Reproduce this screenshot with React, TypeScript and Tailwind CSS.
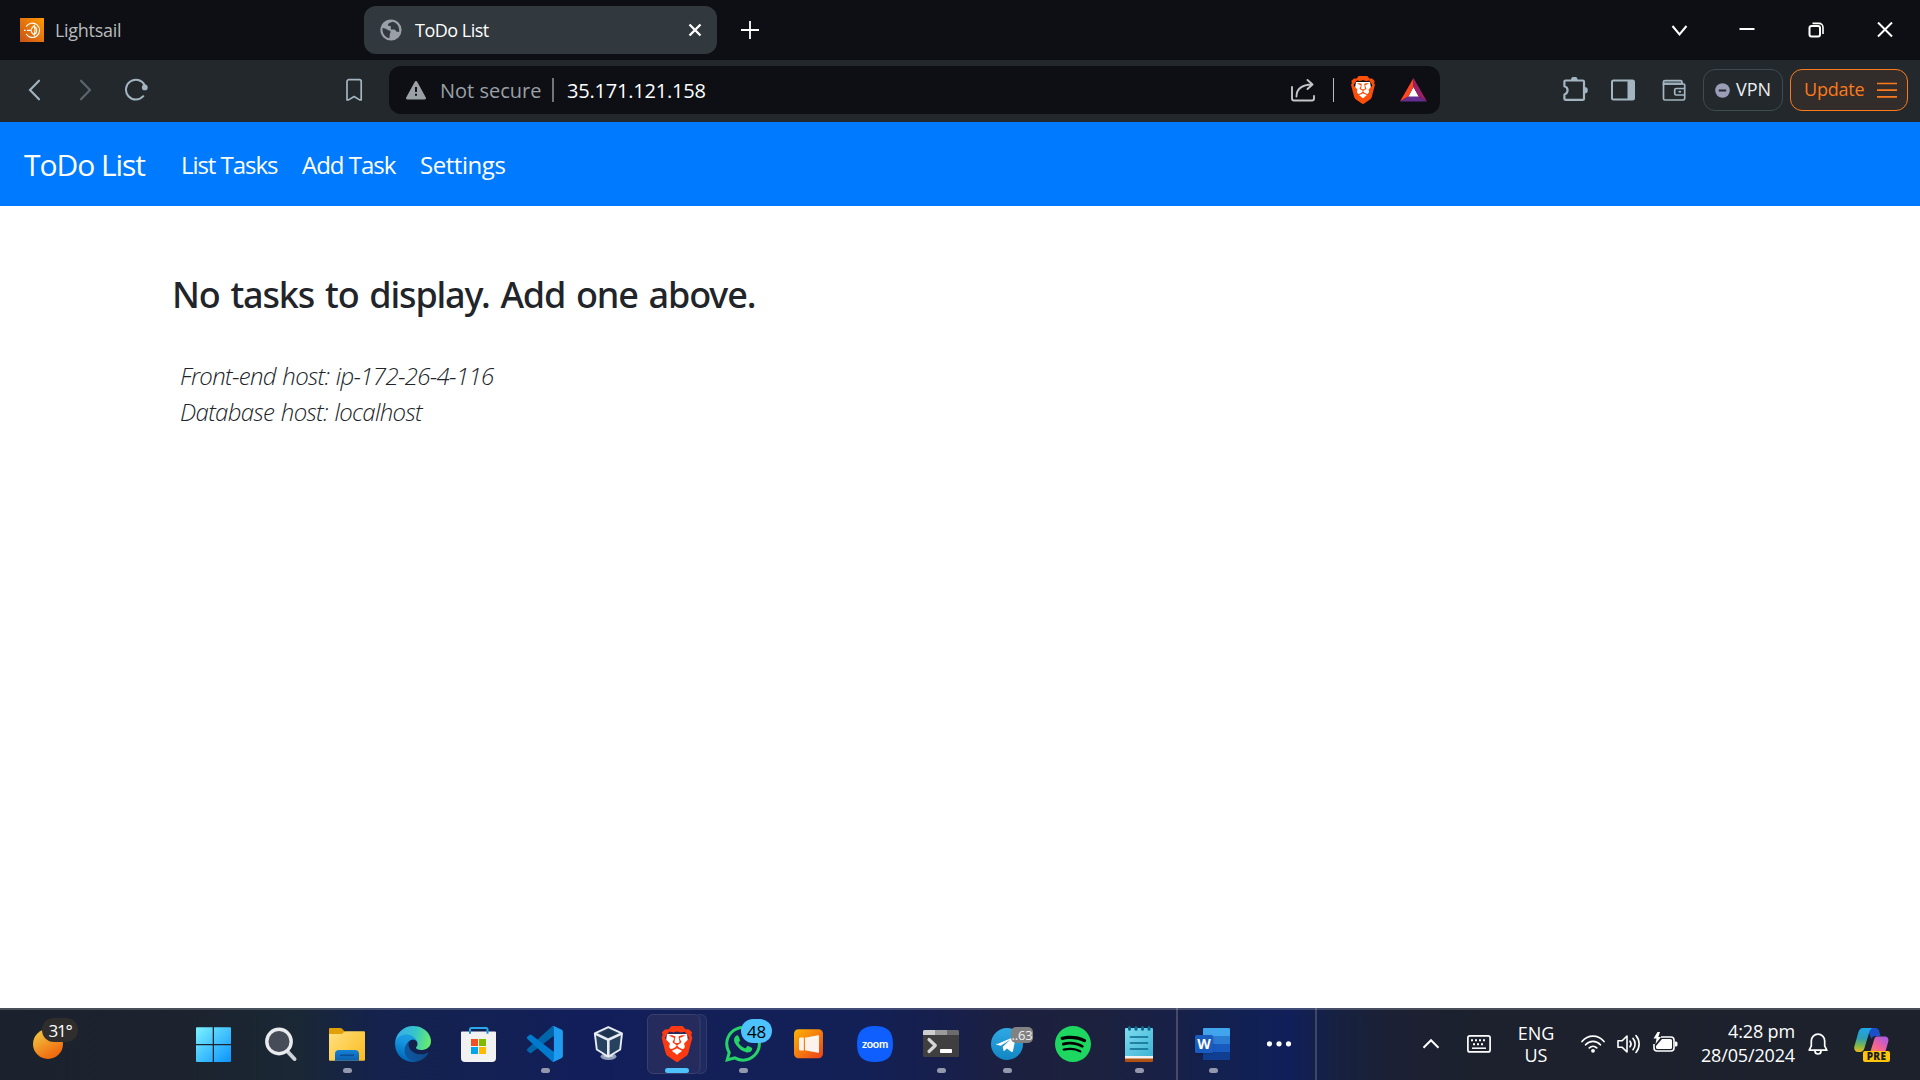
import type { ReactNode } from "react";
import { SiBrave, SiSpotify, SiWhatsapp } from "react-icons/si";

/* ---------- Browser chrome ---------- */

function TabStrip() {
  return (
    <div className="flex h-[60px] items-center bg-[#0d0f14]">
      <svg className="ml-5 size-6 shrink-0" viewBox="0 0 24 24" fill="none">
        <defs>
          <linearGradient id="ls" x1="0" y1="24" x2="24" y2="0" gradientUnits="userSpaceOnUse">
            <stop stopColor="#c9511b" />
            <stop offset="1" stopColor="#ff9900" />
          </linearGradient>
        </defs>
        <path fill="url(#ls)" d="M0 0h24v24H0z" />
        <path stroke="#fff" strokeWidth="1.1" d="M6.200 8.600A7.200 7.200 0 1 1 6.200 16M4 12.400h1.600M7 12.400h3.400M14.400 7.600c-1.400 1.200-3.400 2.800-3.400 4.800s2 3.600 3.400 4.800c.8-3 .8-6.600 0-9.600zM15.200 8.800c2 2 2 5.200 0 7.200" />
      </svg>
      <span className="ml-[11px] w-[309px] text-lg tracking-[-0.3px] text-[#b9babc]">Lightsail</span>
      <div className="flex h-12 w-[353px] items-center rounded-xl bg-[#31393e]">
        <svg className="ml-4 size-[22px]" viewBox="0 0 22 22">
          <circle cx="11" cy="11" r="10.600" fill="#9ba0a8" />
          <path fill="#31393e" d="M2.600 8.800C4.200 9.600 6 9.600 7.400 10.800c1 .8 2.600.4 3.200 1.600.4 1-.8 1.600-.8 2.600 0 1.400-.2 2.800-.4 4.200C5 18.600 1.800 14 2.600 8.800zM12.600 2.800c-1.400 1-3.800.8-4.600 2.600-.4 1 .8 1.600 1.800 1.600 1.200 0 1.400 1 1 2-.4 1 .4 1.800 1.600 1.600 1.600-.2 2.800.2 3.600 1.400.6 1 2 1 3.200.8 .6-5-2.200-9-6.600-10z" />
        </svg>
        <span className="ml-[13px] w-[273px] text-lg tracking-[-0.5px] text-white">ToDo List</span>
        <svg className="size-3.5" viewBox="0 0 14 14" stroke="#fff" strokeWidth="2.300">
          <path d="M1.500 1.500l11 11M12.500 1.500l-11 11" />
        </svg>
      </div>
      <svg className="ml-6 size-[18px]" viewBox="0 0 18 18" stroke="#fff" strokeWidth="1.800">
        <path d="M9 0v18M0 9h18" />
      </svg>
      <div className="ml-auto flex items-center">
        <svg className="h-[13px] w-[17px]" viewBox="0 0 17 13" fill="none" stroke="#fff" strokeWidth="2">
          <path d="M1.500 2l7 8.500 7-8.500" />
        </svg>
        <svg className="ml-[51px] h-4 w-4" viewBox="0 0 16 16" stroke="#fff" strokeWidth="2">
          <path d="M.5 7h15" />
        </svg>
        <svg className="ml-[53px] size-4" viewBox="0 0 16 16" fill="none" stroke="#fff" strokeWidth="2">
          <rect x="1.500" y="4" width="10.500" height="10.500" rx="2" />
          <path strokeWidth="1.600" d="M4.500 1.400h6.500a4 4 0 0 1 4 4v6.500" />
        </svg>
        <svg className="ml-[53px] mr-[27px] size-4" viewBox="0 0 16 16" stroke="#fff" strokeWidth="2">
          <path d="M1 .5l14 14M15 .5l-14 14" />
        </svg>
      </div>
    </div>
  );
}

function Toolbar() {
  return (
    <div className="flex h-[62px] items-center bg-[#23282c] pb-0.5">
      <svg className="ml-7 h-6 w-[14px]" viewBox="0 0 14 24" fill="none" stroke="#a3b5c0" strokeWidth="2.100" strokeLinecap="round">
        <path d="M11 2.700L2 12l9 9.300" />
      </svg>
      <svg className="ml-[37px] h-6 w-[14px]" viewBox="0 0 14 24" fill="none" stroke="#5b666d" strokeWidth="2.100" strokeLinecap="round">
        <path d="M2 2.700l9 9.300-9 9.300" />
      </svg>
      <svg className="ml-[31px] size-6" viewBox="0 0 24 24" fill="none" stroke="#a3b5c0" strokeWidth="2" strokeLinecap="round">
        <path d="M19.300 18.200A9.900 9.900 0 1 1 20.600 7" />
        <circle cx="20.800" cy="9.400" r="2.900" fill="#a3b5c0" stroke="none" />
      </svg>
      <svg className="ml-[197px] h-6 w-[18px]" viewBox="0 0 18 24" fill="none" stroke="#a3b5c0" strokeWidth="1.700" strokeLinejoin="round">
        <path d="M2 3.500a1.800 1.800 0 0 1 1.800-1.800h10.600a1.800 1.800 0 0 1 1.800 1.800v18.400h-1.600L9.100 18.500l-5.500 3.400H2z" />
      </svg>
      <div className="ml-[26px] flex h-12 w-[1051px] items-center rounded-xl bg-[#0d0f14]">
        <svg className="ml-[17px] h-[19px] w-5" viewBox="0 0 20 19">
          <path fill="#9aa0a6" d="M8.800.8a1.400 1.400 0 0 1 2.400 0l8.600 15.600a1.400 1.400 0 0 1-1.200 2.100H1.400a1.400 1.400 0 0 1-1.200-2.100z" />
          <path fill="#0d0f14" d="M9 6h2v5H9zM9 12.800h2v2H9z" />
        </svg>
        <span className="ml-[14px] w-[101px] pt-0.5 text-xl text-[#9aa0a6]">Not secure</span>
        <div className="ml-[11px] h-6 w-0.5 bg-[#70757b]" />
        <span className="ml-[13px] pt-0.5 text-xl tracking-[-0.2px] text-white">35.171.121.158</span>
        <div className="ml-auto flex items-center">
          <svg className="h-6 w-[25px]" viewBox="0 0 25 24" fill="none" stroke="#c3c5c8" strokeWidth="1.900" strokeLinecap="round" strokeLinejoin="round">
            <path d="M1 9v11.500a2 2 0 0 0 2 2h18a2 2 0 0 0 2-2v-2.500M5.500 18.500c0-7 4-11.800 15.800-12M16.500 2l5 4.500-5 4.500" />
          </svg>
          <div className="ml-[17px] h-6 w-px bg-[#b9bbbe]" />
          <span className="relative ml-[17px] flex h-7 w-6 items-center justify-center">
            <svg className="absolute inset-0" viewBox="0 0 24 28">
              <path fill="#fff" d="M5 6h14l1 6-4 9-4 3-4-3-4-9z" />
            </svg>
            <SiBrave className="relative size-7 shrink-0 text-[#fb4f0a]" />
          </span>
          <svg className="ml-[25px] mr-[13px] h-6 w-[27px]" viewBox="0 0 27 24">
            <path fill="#fff" d="M13.500 9l5.500 10H8z" />
            <path fill="#ff4724" d="M13.500 0v9L8.300 18.500 0 23.600z" />
            <path fill="#9e1f63" d="M13.500 0v9l5.200 9.500 8.300 5.100z" />
            <path fill="#662d91" d="M0 23.600l8.300-5.100h10.400l8.300 5.100z" />
          </svg>
        </div>
      </div>
      <svg className="ml-[122px] h-[26px] w-[27px]" viewBox="0 0 27 26" fill="none" stroke="#a3b5c0" strokeWidth="2.200" strokeLinejoin="round">
        <path d="M3.600 3.500h17.200A1.200 1.200 0 0 1 22 4.700v17a1.200 1.200 0 0 1-1.200 1.200H3.600a1.200 1.200 0 0 1-1.200-1.200v-4.200a4.300 4.300 0 0 0 0-8.300V4.700a1.200 1.200 0 0 1 1.200-1.200z" />
        <path fill="#a3b5c0" stroke="none" d="M9 3a3.300 3.300 0 0 1 6.600 0zM22.500 10a3.300 3.300 0 0 1 0 6.600z" />
      </svg>
      <svg className="ml-[22px] h-[22px] w-6" viewBox="0 0 24 22">
        <rect x="1" y="1.500" width="22" height="19" rx="1.500" fill="none" stroke="#a3b5c0" strokeWidth="2" />
        <path fill="#a3b5c0" d="M16.500 1.500H23v19h-6.500z" />
      </svg>
      <svg className="ml-[27px] h-[22px] w-6" viewBox="0 0 24 22" fill="none" stroke="#a3b5c0" strokeWidth="1.700">
        <path fill="#5f6c74" d="M1.500 5V3a1.500 1.500 0 0 1 1.500-1.500h15.500A1.500 1.500 0 0 1 20 3v2z" />
        <path d="M1.500 5h20.200a1 1 0 0 1 1 1v13.500a1.500 1.500 0 0 1-1.500 1.500H3a1.500 1.500 0 0 1-1.500-1.500zM22.700 9.500h-8.500a1.500 1.500 0 0 0-1.500 1.500v3.500a1.500 1.500 0 0 0 1.500 1.500h8.500" />
        <path d="M16.500 12.700h2.600" />
      </svg>
      <div className="ml-[17px] flex h-[42px] w-20 items-center rounded-[12px] border border-[#3f4b50]">
        <svg className="ml-[11px] size-[15px]" viewBox="0 0 15 15">
          <circle cx="7.500" cy="7.500" r="7.300" fill="#9a9db5" />
          <path d="M3.800 7.500h7.400" stroke="#23282c" strokeWidth="2" />
        </svg>
        <span className="ml-[6px] pb-[2px] text-lg text-[#edeef2]">VPN</span>
      </div>
      <div className="ml-[7px] flex h-[42px] w-[118px] items-center rounded-[12px] border border-[#fb7a1c] bg-[#322c2a]">
        <span className="ml-[13px] w-[60px] pb-[2px] text-lg tracking-[-0.2px] text-[#fb7a1c]">Update</span>
        <svg className="ml-[13px] h-4 w-5" viewBox="0 0 20 16" stroke="#fb7a1c" strokeWidth="1.700">
          <path d="M0 1.500h20M0 8.200h20M0 14.900h20" />
        </svg>
      </div>
    </div>
  );
}

/* ---------- Page ---------- */

function Page() {
  return (
    <main className="flex flex-1 flex-col bg-white">
      <nav className="flex h-[84px] items-center bg-[#007bff] pt-px text-2xl text-white">
        <span className="ml-6 w-[157px] text-[30px] tracking-[-1.05px]">ToDo List</span>
        <span className="w-[121px] tracking-[-1.05px]">List Tasks</span>
        <span className="w-[118px] tracking-[-1px]">Add Task</span>
        <span className="tracking-[-0.45px]">Settings</span>
      </nav>
      <div className="pl-[172px] pt-[67px]">
        <h1 className="font-['Noto_Sans',sans-serif] text-[36px] font-medium leading-[44px] tracking-[-1.15px] text-[#212529] [word-spacing:2.6px]">
          No tasks to display. Add one above.
        </h1>
        <div className="mt-[41px] pl-2 text-2xl font-light italic leading-9 text-[#212529] [word-spacing:1px]">
          <p className="tracking-[-0.69px]">Front-end host: ip-172-26-4-116</p>
          <p className="tracking-[-0.66px]">Database host: localhost</p>
        </div>
      </div>
    </main>
  );
}

/* ---------- Taskbar ---------- */

function AppButton({ children, running, overlay }: { children?: ReactNode; running?: boolean; overlay?: ReactNode }) {
  return (
    <div className="relative h-[72px] w-[66px] shrink-0">
      <svg className="size-full" viewBox="0 0 66 72" fill="none">
        {children}
        {running && <rect x="29" y="60" width="9" height="5" rx="2.500" fill="#9498ad" />}
      </svg>
      {overlay}
    </div>
  );
}

function Apps() {
  return (
    <>
      <AppButton>
        <defs>
          <linearGradient id="win" x1="14" y1="19" x2="49" y2="54" gradientUnits="userSpaceOnUse">
            <stop stopColor="#7df3ff" />
            <stop offset="1" stopColor="#0a93ff" />
          </linearGradient>
        </defs>
        <path fill="url(#win)" d="M15 19.300h15.700v16.700H14V20.300a1 1 0 0 1 1-1zM32 19.300h16a1 1 0 0 1 1 1V36H32zM14 37.300h16.700V54H15a1 1 0 0 1-1-1zM32 37.300h17V53a1 1 0 0 1-1 1H32z" />
      </AppButton>
      <AppButton>
        <path d="M39.500 43.500l7 7.500" stroke="#cfd3d8" strokeWidth="4" strokeLinecap="round" />
        <circle cx="31" cy="33.500" r="12.200" fill="#474c59" stroke="#e9ebee" strokeWidth="3.400" />
      </AppButton>
      <AppButton running>
        <defs>
          <linearGradient id="fo" x1="15" y1="23" x2="51" y2="53" gradientUnits="userSpaceOnUse">
            <stop stopColor="#ffe082" />
            <stop offset="1" stopColor="#fbbc1c" />
          </linearGradient>
          <linearGradient id="fb" x1="33" y1="41" x2="33" y2="53" gradientUnits="userSpaceOnUse">
            <stop stopColor="#1585d8" />
            <stop offset="1" stopColor="#0b5fae" />
          </linearGradient>
        </defs>
        <path fill="#e0a006" d="M15 21a1 1 0 0 1 1-1h10.500c2 0 3 3.300 5 3.300V30H15z" />
        <path fill="url(#fo)" d="M15 26h12.500c1.600 0 2.500-2.700 4.500-2.700h18a1 1 0 0 1 1 1V51.700a1 1 0 0 1-1 1H16a1 1 0 0 1-1-1z" />
        <path fill="url(#fb)" d="M21 52.700V46a4 4 0 0 1 4-4h16a4 4 0 0 1 4 4v6.700z" />
        <path d="M26 47.300h14" stroke="#0a4f93" strokeWidth="1.600" />
      </AppButton>
      <AppButton>
        <defs>
          <linearGradient id="e1" x1="58" y1="177" x2="237" y2="177" gradientUnits="userSpaceOnUse">
            <stop stopColor="#0c59a4" />
            <stop offset="1" stopColor="#114a8b" />
          </linearGradient>
          <linearGradient id="e2" x1="120" y1="90" x2="60" y2="240" gradientUnits="userSpaceOnUse">
            <stop stopColor="#1b9de2" />
            <stop offset="0.300" stopColor="#1595df" />
            <stop offset="1" stopColor="#0067b9" />
          </linearGradient>
          <linearGradient id="e3" x1="20" y1="60" x2="245" y2="120" gradientUnits="userSpaceOnUse">
            <stop stopColor="#35aee8" />
            <stop offset="0.500" stopColor="#36c6c8" />
            <stop offset="1" stopColor="#66eb6e" />
          </linearGradient>
        </defs>
        <g transform="translate(15 18) scale(0.1406)">
          <path fill="url(#e1)" d="M231 190.500c-3.400 1.800-6.900 3.400-10.500 4.700a101.700 101.700 0 0 1-35.900 6.500c-47.300 0-88.500-32.500-88.500-74.300.1-11.400 6.400-21.900 16.400-27.300-42.800 1.800-53.800 46.400-53.800 72.500 0 73.900 68.100 81.400 82.800 81.400 7.900 0 19.800-2.300 27-4.600l1.300-.4a128.300 128.300 0 0 0 66.600-52.800 4 4 0 0 0-5.400-5.700z" />
          <path fill="url(#e2)" d="M105.700 241.400a79.200 79.200 0 0 1-22.700-21.300 80.700 80.700 0 0 1 29.500-120c3.200-1.500 8.500-4.100 15.600-4a32.400 32.400 0 0 1 25.700 13 31.900 31.900 0 0 1 6.300 18.700c0-.2 24.500-79.600-80-79.600-43.900 0-80 41.700-80 78.200a130.200 130.200 0 0 0 12.100 56 128 128 0 0 0 156.400 67 75.500 75.500 0 0 1-62.800-8z" />
          <path fill="url(#e3)" d="M152.300 148.900c-.9 1-3.400 2.500-3.400 5.600 0 2.600 1.700 5.200 4.800 7.300 14.300 10 41.400 8.600 41.500 8.600a59.600 59.600 0 0 0 30.300-8.300 61.400 61.400 0 0 0 30.400-52.900c.3-22.400-8-37.300-11.300-43.900C223.500 23.900 177.700 0 128 0A128 128 0 0 0 0 126.200c.5-36.500 36.800-66 80-66 3.500 0 23.500.3 42 10.100 16.300 8.600 24.900 18.900 30.800 29.200 6.200 10.700 7.300 24.100 7.300 29.500 0 5.300-2.700 13.300-7.800 19.900z" />
        </g>
      </AppButton>
      <AppButton>
        <path d="M24 25.500V21.500a1.500 1.500 0 0 1 1.500-1.500h14.500a1.500 1.500 0 0 1 1.500 1.500v4" stroke="#2aa9ea" strokeWidth="2" />
        <path fill="#f2f2f3" d="M15 24.500a1 1 0 0 1 1-1h33a1 1 0 0 1 1 1V50a4 4 0 0 1-4 4H19a4 4 0 0 1-4-4z" />
        <path d="M24 23v2.700M41.500 23v2.700" stroke="#1490df" strokeWidth="2" />
        <path fill="#f25022" d="M25 31h7v7h-7z" />
        <path fill="#7fba00" d="M33 31h7v7h-7z" />
        <path fill="#00a4ef" d="M25 39h7v7h-7z" />
        <path fill="#ffb900" d="M33 39h7v7h-7z" />
      </AppButton>
      <AppButton running>
        <g transform="translate(15 18) scale(0.1406)">
          <path fill="#0065a9" d="M246.135 26.873L193.409 1.486a15.940 15.940 0 0 0-18.190 3.092L2.612 161.960a10.660 10.660 0 0 0 .006 15.766l14.100 12.817a10.660 10.660 0 0 0 13.610.606L238.186 33.455c6.975-5.291 16.994-.317 16.994 8.438v-.612a15.996 15.996 0 0 0-9.045-14.408" />
          <path fill="#007acc" d="M246.135 226.816l-52.726 25.387a15.950 15.950 0 0 1-18.190-3.092L2.612 91.729a10.660 10.660 0 0 1 .006-15.766l14.100-12.817a10.660 10.660 0 0 1 13.610-.607l207.858 157.693c6.975 5.291 16.994.317 16.994-8.438v.612a15.996 15.996 0 0 1-9.045 14.410" />
          <path fill="#1f9cf0" d="M193.428 252.134a15.950 15.950 0 0 1-18.209-3.093c5.905 5.905 15.999 1.723 15.999-6.627V11.273c0-8.350-10.094-12.532-15.999-6.627a15.950 15.950 0 0 1 18.209-3.092l52.717 25.351a16 16 0 0 1 9.065 14.420v171.037a16 16 0 0 1-9.065 14.420z" />
        </g>
      </AppButton>
      <AppButton>
        <ellipse cx="30.500" cy="48.500" rx="8" ry="3.500" fill="#8fa0b8" />
        <path fill="#c3cddb" d="M27 44h7l1 5h-9z" />
        <path fill="#27425f" stroke="#e9edf3" strokeWidth="1.900" strokeLinejoin="round" d="M30.300 19.200L44 25.300l-1.800 16.200-11.900 7.300-11.500-7.300-2-16.200z" />
        <path stroke="#e9edf3" strokeWidth="2.600" strokeLinejoin="round" d="M17.300 25.600l13 6.200 13.200-6.200M30.300 31.800v16.500" />
        <path fill="#1d3450" d="M30.300 21.600l8.700 3.900-8.700 4-8.500-4z" />
      </AppButton>
      <AppButton
        overlay={
          <span className="absolute left-[18px] top-[18px] flex h-9 w-[30px] items-center justify-center">
            <SiBrave className="size-9 shrink-0 text-[#fb3a12]" />
          </span>
        }
      >
        <path d="M54 6.500h3a5.500 5.500 0 0 1 5.500 5.500v48a5.500 5.500 0 0 1-5.500 5.500h-3" fill="#fff" fillOpacity="0.050" stroke="#fff" strokeOpacity="0.100" />
        <rect x="3.500" y="6.500" width="52.500" height="59" rx="5.500" fill="#252c5d" stroke="#39406d" />
        <rect x="21" y="60" width="24" height="5" rx="2.500" fill="#4cc2ff" />
        <path fill="#fff" d="M23 26h20l1 7-5 11-6 5-6-5-5-11z" />
      </AppButton>
      <AppButton
        running
        overlay={
          <>
            <SiWhatsapp className="absolute left-[15px] top-[18px] size-9 text-[#25d366]" />
            <span className="absolute left-[31px] top-[11px] flex h-6 w-[31px] items-center justify-center rounded-full bg-[#4cc2ff] text-[17px] leading-none tracking-[-0.3px] text-black">48</span>
          </>
        }
      />
      <AppButton>
        <defs>
          <linearGradient id="cam" x1="18" y1="21" x2="47" y2="50" gradientUnits="userSpaceOnUse">
            <stop stopColor="#fbb503" />
            <stop offset="0.500" stopColor="#f57c10" />
            <stop offset="1" stopColor="#ec3f1c" />
          </linearGradient>
        </defs>
        <rect x="18" y="21.300" width="29" height="29" rx="4.500" fill="url(#cam)" />
        <path fill="#fdf3ee" d="M23 31a1.500 1.500 0 0 1 1.500-1.500h3.300v13h-3.300A1.500 1.500 0 0 1 23 41zM29 29.800l13-2.600a.8.800 0 0 1 1 .8v16a.8.800 0 0 1-1 .8l-13-2.600z" />
      </AppButton>
      <AppButton
        overlay={
          <span className="absolute left-[15px] top-[18px] flex size-9 items-center justify-center pb-0.5 font-['Lato',sans-serif] text-[11px] font-bold leading-none tracking-[-0.200px] text-white">
            zoom
          </span>
        }
      >
        <path fill="#0f5fff" d="M33 18c12.500 0 18 5.500 18 18s-5.500 18-18 18-18-5.500-18-18 5.500-18 18-18z" />
      </AppButton>
      <AppButton running>
        <rect x="15" y="22" width="36" height="27" rx="1.500" fill="#3f3f40" />
        <path fill="#cfcfcf" d="M15 23.500a1.500 1.500 0 0 1 1.500-1.500H27v5H15z" />
        <path fill="#9b9b9b" d="M27 22h12v5H27z" />
        <path fill="#6c6c6c" d="M39 22h10.500a1.500 1.500 0 0 1 1.500 1.500V27H39z" />
        <path d="M21 31.500l6.300 6-6.300 6" stroke="#d5d5d5" strokeWidth="3.200" strokeLinecap="round" strokeLinejoin="round" />
        <rect x="32" y="41" width="12" height="4" rx="0.800" fill="#fff" />
      </AppButton>
      <AppButton
        running
        overlay={
          <span className="absolute left-[37px] top-[19px] flex h-4 w-[22px] items-center justify-center rounded-[5px] bg-[#828282] text-[13px] leading-none tracking-[-0.2px] text-[#f2f2f2]">..63</span>
        }
      >
        <defs>
          <linearGradient id="tg" x1="33" y1="20" x2="33" y2="52" gradientUnits="userSpaceOnUse">
            <stop stopColor="#2fa9e4" />
            <stop offset="1" stopColor="#1286c4" />
          </linearGradient>
        </defs>
        <circle cx="33" cy="36" r="16" fill="url(#tg)" />
        <path fill="#fff" d="M22.800 36.300l17.500-7.500c1-.3 1.500.2 1.300 1.300l-2.600 12.800c-.2 1-.9 1.300-1.800.8l-4.300-3.200-2.400 2.300c-.5.4-.9.200-1-.4l-.8-3.600 7.800-7.300-9.800 6.200-4-1c-.7-.2-.6-.9.1-1.400z" />
      </AppButton>
      <AppButton overlay={<SiSpotify className="absolute left-[15px] top-[18px] size-9 text-[#1ed760]" />}>
        <circle cx="33" cy="36" r="17" fill="#000" />
      </AppButton>
      <AppButton running>
        <defs>
          <linearGradient id="np" x1="19" y1="20" x2="47" y2="48" gradientUnits="userSpaceOnUse">
            <stop stopColor="#7fdcf0" />
            <stop offset="1" stopColor="#3fb4d4" />
          </linearGradient>
        </defs>
        <path fill="#b35312" d="M19 48h28v5a1 1 0 0 1-1 1H20a1 1 0 0 1-1-1z" />
        <path fill="#f1f1f1" d="M19 46h28v4.500H19z" />
        <path fill="url(#np)" d="M19 21a1 1 0 0 1 1-1h26a1 1 0 0 1 1 1v27H19z" />
        <path d="M24.500 29h17M24.500 35h17M24.500 41h17" stroke="#0b6a8e" strokeWidth="1.700" strokeLinecap="round" />
        <path d="M23.500 19.500v1.800M30 19.500v1.800M36.500 19.500v1.800M43 19.500v1.800" stroke="#0b6a8e" strokeWidth="3" strokeLinecap="round" />
      </AppButton>
      <div className="ml-1 h-[72px] w-0.5 shrink-0 bg-[#454b66]" />
      <div className="ml-0.5 flex">
        <AppButton
          running
          overlay={
            <span className="absolute left-[15px] top-[27px] flex size-[18px] items-center justify-center rounded-[1.500px] bg-[#1a5bbe] text-[14px] font-bold leading-none text-white shadow-sm">W</span>
          }
        >
          <path fill="#41a5ee" d="M23 21a1 1 0 0 1 1-1h25a1 1 0 0 1 1 1v7H23z" />
          <path fill="#2b7cd3" d="M23 28h27v8H23z" />
          <path fill="#185abd" d="M23 36h27v8H23z" />
          <path fill="#103f91" d="M23 44h27v7a1 1 0 0 1-1 1H24a1 1 0 0 1-1-1z" />
        </AppButton>
        <AppButton>
          <g fill="#fff">
            <circle cx="23.500" cy="35.800" r="2.600" />
            <circle cx="33" cy="35.800" r="2.600" />
            <circle cx="42.500" cy="35.800" r="2.600" />
          </g>
        </AppButton>
      </div>
      <div className="ml-[3px] h-[72px] w-0.5 shrink-0 bg-[#3f4663]" />
    </>
  );
}

function Tray() {
  return (
    <div className="ml-auto flex h-[70px] items-center text-lg leading-6 text-white">
      <svg className="h-3 w-[18px]" viewBox="0 0 18 12" fill="none" stroke="#fff" strokeWidth="2">
        <path d="M1.500 9.800L9 2.200l7.500 7.600" />
      </svg>
      <svg className="ml-[27px] h-[18px] w-6" viewBox="0 0 24 18" fill="none">
        <rect x="0.900" y="0.900" width="22.200" height="16" rx="2" stroke="#fff" strokeWidth="1.700" />
        <path d="M4 5.200h16M6 9.200h12" stroke="#fff" strokeWidth="2" strokeDasharray="2 2" />
        <path d="M5 13.200h14" stroke="#fff" strokeWidth="1.500" />
      </svg>
      <div className="ml-[25px] flex w-10 flex-col text-center leading-[22.500px] tracking-[-0.1px]">
        <span>ENG</span>
        <span>US</span>
      </div>
      <svg className="ml-[25px] h-[18px] w-6" viewBox="0 0 24 18" fill="none" stroke="#fff" strokeWidth="1.700" strokeLinecap="round">
        <path d="M1 6.500C7-.6 17-.6 23 6.500M4.600 9.800c4.200-4.600 10.600-4.600 14.800 0M8.300 12.900c2.200-2.200 5.200-2.200 7.400 0" />
        <circle cx="12" cy="15.800" r="1.900" fill="#fff" stroke="none" />
      </svg>
      <svg className="ml-3 h-5 w-6" viewBox="0 0 24 20" fill="none" stroke="#fff" strokeWidth="1.600" strokeLinecap="round" strokeLinejoin="round">
        <path d="M1 6.800h4L10 2v16l-5-4.800H1zM13 7.200a4.500 4.500 0 0 1 0 5.600M16 4.400a8.500 8.500 0 0 1 0 11.200M19 1.600a12.800 12.800 0 0 1 0 16.800" />
      </svg>
      <svg className="mb-1 ml-3 h-5 w-[25px]" viewBox="0 0 25 20" fill="none">
        <path d="M8 5h10a3 3 0 0 1 3 3v8a3 3 0 0 1-3 3H4a3 3 0 0 1-3-3v-4" stroke="#fff" strokeWidth="1.600" />
        <path fill="#fff" d="M22 9.500h1a1.500 1.500 0 0 1 1.500 1.500v2A1.500 1.500 0 0 1 23 14.500h-1zM9 7h8.500a1.500 1.500 0 0 1 1.500 1.500v7a1.500 1.500 0 0 1-1.500 1.500h-13A1.500 1.500 0 0 1 3 15.500V14zM4.500 0L.5 6.500h3L2.500 12l5.500-7H5.300L7 0z" />
      </svg>
      <div className="ml-[19px] mr-px flex w-[98px] flex-col pb-0.5 text-right leading-6 tracking-[-0.15px]">
        <span>4:28 pm</span>
        <span>28/05/2024</span>
      </div>
      <svg className="ml-3 h-[22px] w-5" viewBox="0 0 20 22" fill="none" stroke="#fff" strokeWidth="1.700" strokeLinejoin="round">
        <path d="M10 1.200a6.700 6.700 0 0 0-6.700 6.700v5L1.200 17.200h17.600l-2.100-4.300v-5A6.700 6.700 0 0 0 10 1.200zM7 18a3 3 0 0 0 6 0" />
      </svg>
      <div className="relative ml-[26px] mr-[30px] h-[35px] w-[36px]">
        <svg className="size-full" viewBox="0 0 36 35">
          <defs>
            <linearGradient id="c1" x1="8" y1="0" x2="6" y2="25" gradientUnits="userSpaceOnUse">
              <stop stopColor="#1fa5f0" />
              <stop offset="0.450" stopColor="#2c9fb8" />
              <stop offset="0.750" stopColor="#7fb74a" />
              <stop offset="1" stopColor="#e8b923" />
            </linearGradient>
            <linearGradient id="c2" x1="32" y1="9" x2="20" y2="26" gradientUnits="userSpaceOnUse">
              <stop stopColor="#a45be8" />
              <stop offset="0.600" stopColor="#f0609c" />
              <stop offset="1" stopColor="#fa8060" />
            </linearGradient>
          </defs>
          <path fill="#1b50c8" d="M13 1h8.500c2 0 3 1 3.700 3l1.300 5h-5c-2 0-3.500 1-4 3z" />
          <path fill="url(#c1)" d="M9 1h9.500c-2.500 1-3 3-3.800 6L10.500 21c-.8 2.500-2.300 4-4.500 4H4c-3 0-4.500-2.500-3.500-6L4.300 5.500C5.200 2.500 6.500 1 9 1z" />
          <path fill="url(#c2)" d="M23 9.500h8c2.500 0 4 2.200 3.300 5L31 26H16l4.200-13.500c.5-1.800 1.300-3 2.800-3z" />
        </svg>
        <span className="absolute bottom-0 right-0 flex h-[11px] w-[27px] items-center justify-center rounded-[2px] bg-[#fdc50b] text-[10px] font-extrabold leading-none tracking-[0.300px] text-[#1c1c1c]">PRE</span>
      </div>
    </div>
  );
}

function Taskbar() {
  return (
    <footer className="relative flex h-[72px] items-center bg-[linear-gradient(90deg,#1c222d_0px,#1c232e_180px,#1a2735_300px,#14224c_370px,#132153_470px,#121e5a_590px,#132058_700px,#132056_860px,#171f4b_950px,#1c2040_1010px,#1c213d_1090px,#182047_1170px,#12214f_1220px,#101f59_1290px,#17213f_1340px,#1c2033_1400px,#1c212d_1480px,#1c212c_1920px)]">
      <div className="absolute inset-x-0 top-0 h-0.5 bg-white/20" />
      <div className="relative ml-[33px] h-[42px] w-[149px]">
        <svg className="h-[42px] w-[46px]" viewBox="0 0 46 42">
          <defs>
            <linearGradient id="sun" x1="5" y1="12" x2="22" y2="40" gradientUnits="userSpaceOnUse">
              <stop stopColor="#f0bb3c" />
              <stop offset="0.700" stopColor="#f27212" />
              <stop offset="1" stopColor="#ec6210" />
            </linearGradient>
          </defs>
          <circle cx="15" cy="21" r="15" fill="url(#sun)" />
        </svg>
        <span className="absolute -top-[5px] left-[9px] flex h-6 w-9 items-center justify-center rounded-full bg-[#2f2e2d] text-[17px] leading-none tracking-[-1.2px] text-white">31°</span>
      </div>
      <Apps />
      <Tray />
    </footer>
  );
}

export default function App() {
  return (
    <div className="flex h-[1080px] w-[1920px] flex-col overflow-hidden whitespace-nowrap font-['Open_Sans','Noto_Sans',sans-serif]">
      <TabStrip />
      <Toolbar />
      <Page />
      <Taskbar />
    </div>
  );
}
